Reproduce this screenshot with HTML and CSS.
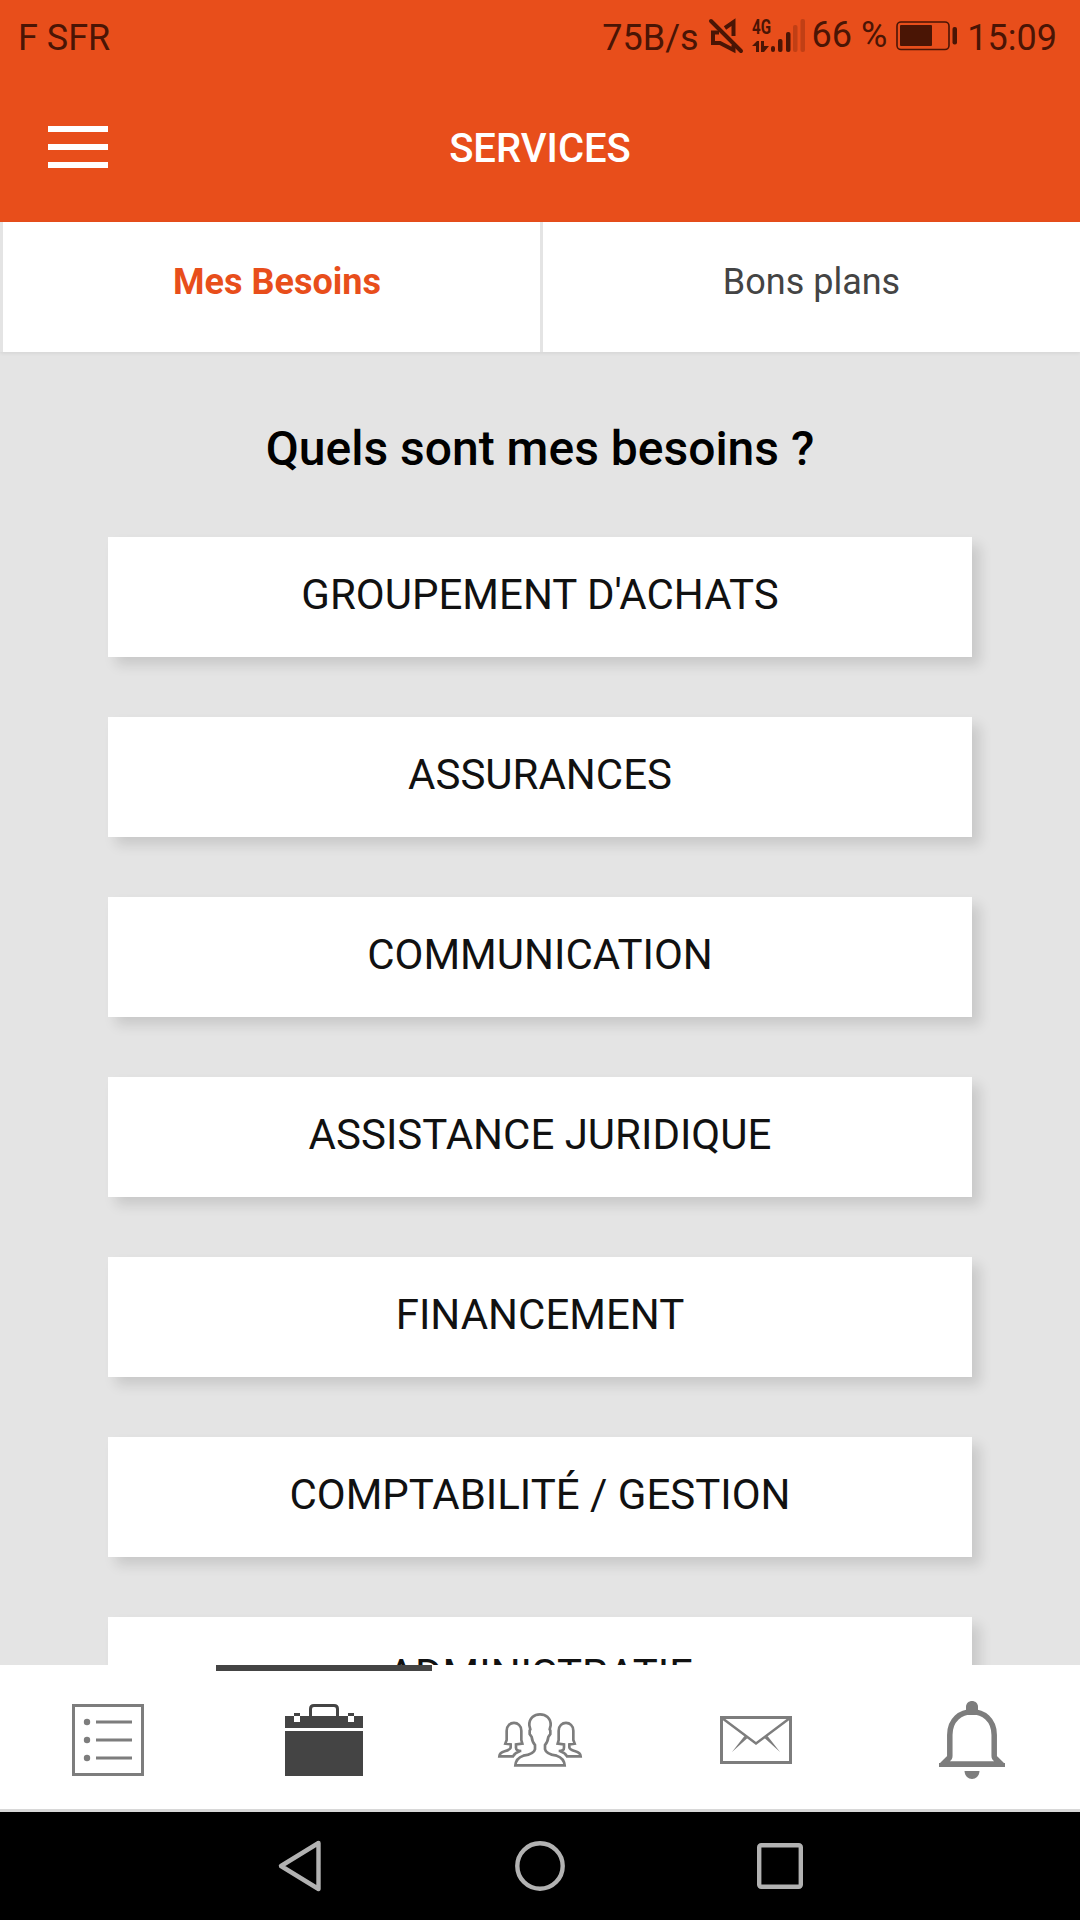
FILE: index.html
```html
<!DOCTYPE html>
<html lang="fr">
<head>
  <meta charset="UTF-8" />
  <meta name="viewport" content="width=device-width, initial-scale=1.0"/>
  <title>Services</title>
  <link rel="stylesheet" href="styles.css">
</head>
<body>
  <div class="status-bar">
    <span class="carrier">F SFR</span>
    <span class="speed">75B/s</span>
    <svg class="mute" width="34" height="34" viewBox="0 0 34 34" fill="none" stroke="#4a1505" stroke-width="4">
      <path d="M2 2L32 32" stroke-linecap="round"/>
      <path d="M16 9L24.500 3V17M10 13.500H4V24H11L24.500 31V26"/>
    </svg>
    <svg class="signal" width="54" height="36" viewBox="0 0 54 36" fill="#4a1505">
      <text x="0" y="16" font-size="20" font-weight="700" textLength="19" lengthAdjust="spacingAndGlyphs">4G</text>
      <path d="M0 28L5 23H7V34H4V28ZM9 23H12V28H17L12 34H9Z"/>
      <rect x="19" y="28" width="4" height="6" rx="2"/>
      <rect x="26" y="21" width="4.500" height="13" rx="2"/>
      <rect x="34" y="14" width="4.500" height="20" rx="2"/>
      <rect x="41" y="7" width="4.500" height="27" rx="2" opacity=".25"/>
      <rect x="48.500" y="1" width="4.500" height="33" rx="2" opacity=".25"/>
    </svg>
    <span class="percent">66 %</span>
    <svg class="battery" width="62" height="30" viewBox="0 0 62 30" fill="#4a1505">
      <rect x="1" y="1" width="52" height="27.500" rx="4" fill="none" stroke="#4a1505" stroke-width="1.600"/>
      <rect x="4" y="4" width="32" height="21" rx="1"/>
      <rect x="56.500" y="6" width="4.500" height="17.500" rx="2"/>
    </svg>
    <span class="clock">15:09</span>
  </div>

  <header class="header">
    <div class="burger">
      <span></span>
      <span></span>
      <span></span>
    </div>
    <h1>SERVICES</h1>
  </header>

  <div class="tabs">
    <div class="tab active">Mes Besoins</div>
    <div class="tab">Bons plans</div>
  </div>

  <main class="content">
    <h2>Quels sont mes besoins ?</h2>
    <div class="card">GROUPEMENT D'ACHATS</div>
    <div class="card">ASSURANCES</div>
    <div class="card">COMMUNICATION</div>
    <div class="card">ASSISTANCE JURIDIQUE</div>
    <div class="card">FINANCEMENT</div>
    <div class="card">COMPTABILITÉ / GESTION</div>
    <div class="card">ADMINISTRATIF</div>
  </main>

  <nav class="bottom-nav">
    <div class="nav-item">
      <svg width="72" height="72" viewBox="0 0 72 72" fill="none" stroke="#7d7d7d" stroke-width="3">
        <rect x="1.500" y="1.500" width="69" height="69"/>
        <path d="M24 18H60M24 36H60M24 54H60"/>
        <g fill="#7d7d7d" stroke="none">
          <circle cx="15" cy="18" r="3.200"/>
          <circle cx="15" cy="36" r="3.200"/>
          <circle cx="15" cy="54" r="3.200"/>
        </g>
      </svg>
    </div>
    <div class="nav-item selected">
      <svg width="78" height="72" viewBox="0 0 78 72" fill="#444">
        <path d="M0 12H9V18H15V12H63V18H69V12H78V24H0ZM0 27H78V72H0ZM9 9H15V12H9ZM63 9H69V12H63Z"/>
        <path d="M25.500 13V5Q25.500 1.500 29 1.500H49Q52.500 1.500 52.500 5V13" fill="none" stroke="#444" stroke-width="3"/>
      </svg>
    </div>
    <div class="nav-item">
      <svg width="84" height="54" viewBox="354 339 252 162" fill="none" stroke="#7d7d7d" stroke-width="8">
        <path d="M406 496H554Q552 474 530 467Q498 463 495 448V435Q503 427 505 411L511 402V392L509 388L512 376C514 332 446 332 448 376L451 388L449 392V402L455 411Q457 427 465 435V448Q462 463 430 467Q408 474 406 496Z"/>
        <path d="M424 453Q407 453 408 442V433L427 431L424 420V392C424 361 380 361 380 392V420L376 431L392 433V442Q392 449 374 454Q359 458 358 469H399Q405 459 419 454"/>
        <path d="M536 453Q553 453 552 442V433L533 431L536 420V392C536 361 580 361 580 392V420L584 431L568 433V442Q568 449 586 454Q601 458 602 469H561Q555 459 541 454"/>
      </svg>
    </div>
    <div class="nav-item">
      <svg width="72" height="48" viewBox="0 0 72 48" fill="none" stroke="#7d7d7d">
        <rect x="1.500" y="1.500" width="69" height="45" stroke-width="3"/>
        <path d="M2 2L36 27.500L70 2" stroke-width="2.500"/>
        <path d="M24.500 20L27.500 22L12 36ZM47.500 20L44.500 22L60 36Z" fill="#7d7d7d" stroke="none"/>
      </svg>
    </div>
    <div class="nav-item">
      <svg class="bell" width="66" height="78" viewBox="0 0 66 78" fill="#7d7d7d">
        <path d="M27 14V6C27 -2 39 -2 39 6V14Z"/>
        <path d="M10.800 55V34C10.800 3 55.200 3 55.200 34V55Q55.200 57 57 58L62 63H4L9 58Q10.800 57 10.800 55Z" fill="none" stroke="#7d7d7d" stroke-width="5.500"/>
        <path d="M0 62H66V66H0Z"/>
        <path d="M25.500 70H40.500C40 80.500 26 80.500 25.500 70Z"/>
      </svg>
    </div>
  </nav>

  <div class="system-nav">
    <svg width="44" height="52" viewBox="0 0 44 52">
      <path d="M40.500 3L3 26L40.500 49Z"/>
    </svg>
    <svg width="50" height="50" viewBox="0 0 50 50">
      <circle cx="25" cy="25" r="22.700"/>
    </svg>
    <svg width="46" height="46" viewBox="0 0 46 46">
      <rect x="2.200" y="2.200" width="41.600" height="41.600" rx="2"/>
    </svg>
  </div>
</body>
</html>
```
FILE: styles.css
```css
* {
  box-sizing: border-box;
}

body {
  margin: 0;
  height: 1920px;
  display: flex;
  flex-direction: column;
  background-color: #e4e4e4;
  font-family: Roboto, sans-serif;
  overflow: hidden;
}

svg {
  display: block;
  flex-shrink: 0;
  overflow: visible;
}

.status-bar {
  display: flex;
  align-items: flex-start;
  height: 72px;
  padding: 17px 23px 0 18px;
  background-color: #e84e1b;
  color: #4a1505;
  font-size: 36px;
  line-height: 42px;
  white-space: nowrap;
}

.speed {
  margin-left: auto;
}

.mute {
  margin: 2px 0 0 10px;
}

.signal {
  margin: 1px 0 0 9px;
}

.percent {
  margin: -3px 0 0 6px;
}

.battery {
  margin: 4px 0 0 9px;
}

.clock {
  margin-left: 9px;
}

.header {
  display: grid;
  grid-template-columns: 60px 1fr 60px;
  align-items: center;
  height: 150px;
  padding: 0 48px;
  background-color: #e84e1b;
}

.burger {
  display: flex;
  flex-direction: column;
  gap: 12px;
}

.burger span {
  height: 6px;
  background-color: white;
}

.header h1 {
  margin: 2px 0 0;
  color: white;
  font-size: 40px;
  font-weight: 500;
  text-align: center;
}

.tabs {
  display: flex;
  height: 130px;
  box-shadow: 0 1px 4px rgba(0, 0, 0, 0.08);
}

.tab {
  width: 50%;
  border-left: 3px solid #e4e4e4;
  background-color: white;
  color: #444;
  font-size: 36px;
  line-height: 120px;
  text-align: center;
}

.tab.active {
  padding-left: 11px;
  color: #e84e1b;
  font-weight: bold;
}

.content {
  flex: 1;
  min-height: 0;
  display: flex;
  flex-direction: column;
  gap: 60px;
  padding: 0 108px;
  overflow: hidden;
}

.content h2 {
  margin: 69px 0 0;
  font-size: 48px;
  font-weight: 500;
  line-height: 56px;
  text-align: center;
}

.card {
  flex: 0 0 120px;
  background-color: white;
  box-shadow: 8px 8px 12px rgba(0, 0, 0, 0.12);
  color: #111;
  font-size: 42px;
  line-height: 116px;
  text-align: center;
}

.bottom-nav {
  display: flex;
  height: 147px;
  background-color: white;
  border-bottom: 3px solid #d8d8d8;
}

.nav-item {
  flex: 1;
  display: flex;
  justify-content: center;
  align-items: center;
  padding-top: 6px;
}

.nav-item.selected {
  padding-top: 0;
  border-top: 6px solid #444;
}

.bell {
  overflow: hidden;
}

.system-nav {
  display: flex;
  align-items: center;
  height: 108px;
  padding: 0 277px 0 278px;
  justify-content: space-between;
  background-color: black;
}

.system-nav svg {
  fill: none;
  stroke: #b2b2b2;
  stroke-width: 4.4;
  stroke-linejoin: round;
}
```
